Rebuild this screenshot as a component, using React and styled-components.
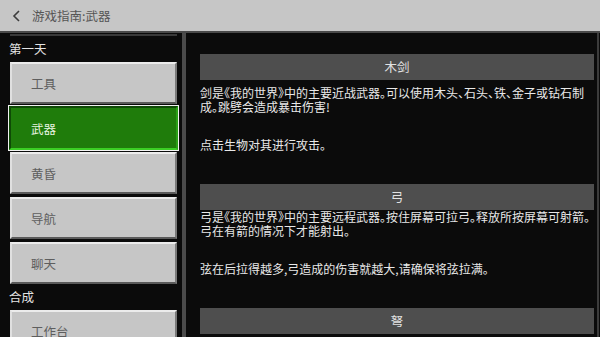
import { createGlobalStyle } from 'styled-components';
import styled from 'styled-components';

const GlobalStyle = createGlobalStyle`
  html, body {
    margin: 0;
    padding: 0;
    background: #0b0b0b;
  }
  body {
    font-family: "Noto Sans CJK SC", "Noto Sans", sans-serif;
    font-feature-settings: "halt";
  }
`;

const days = [
  { title: '第一天', items: ['工具', '武器', '黄昏', '导航', '聊天'] },
  { title: '合成', items: ['工作台'] },
];

const sections = [
  {
    name: '木剑',
    lead: 6,
    paras: [
      '剑是《我的世界》中的主要近战武器。可以使用木头、石头、铁、金子或钻石制成。跳劈会造成暴击伤害!',
      '点击生物对其进行攻击。',
    ],
  },
  {
    name: '弓',
    lead: 0,
    paras: [
      '弓是《我的世界》中的主要远程武器。按住屏幕可拉弓。释放所按屏幕可射箭。弓在有箭的情况下才能射出。',
      '弦在后拉得越多,弓造成的伤害就越大,请确保将弦拉满。',
    ],
  },
  { name: '弩', lead: 0, paras: [] },
];

export default function App() {
  const active = '武器';
  return (
    <SScreen>
      <GlobalStyle />
      <STopBar>
        <SBack>
          <svg width="10" height="14" viewBox="0 0 10 14">
            <polyline points="7,2 2,7 7,12" fill="none" stroke="#3c3c3c" strokeWidth="1.6" />
          </svg>
        </SBack>
        <STitle>游戏指南:武器</STitle>
      </STopBar>
      <SBody>
        <SSidebar>
          <SScrolledEdge />
          {days.map((group) => (
            <div key={group.title}>
              <SGroupLabel>{group.title}</SGroupLabel>
              <SList>
                {group.items.map((item) => (
                  <SNavButton key={item} $active={item === active}>
                    {item}
                  </SNavButton>
                ))}
              </SList>
            </div>
          ))}
        </SSidebar>
        <SDivider />
        <SContent>
          {sections.map((s) => (
            <SSection key={s.name}>
              <SHeader>{s.name}</SHeader>
              {s.paras.length > 0 && (
                <SText $lead={s.lead}>
                  {s.paras.map((p) => (
                    <p key={p}>{p}</p>
                  ))}
                </SText>
              )}
            </SSection>
          ))}
        </SContent>
        <SScrollbar />
      </SBody>
    </SScreen>
  );
}

const SScreen = styled.div`
  width: 600px;
  height: 337px;
  overflow: hidden;
  display: flex;
  flex-direction: column;
  background: #0b0b0b;
`;

const STopBar = styled.div`
  height: 31px;
  flex-shrink: 0;
  display: flex;
  align-items: center;
  background: #c6c6c6;
  border-bottom: 2px solid #4a4a4a;
`;

const SBack = styled.div`
  width: 31px;
  display: flex;
  justify-content: center;
  padding-left: 1px;
`;

const STitle = styled.div`
  font-size: 12.5px;
  color: #555;
`;

const SBody = styled.div`
  flex: 1;
  display: flex;
  overflow: hidden;
`;

const SSidebar = styled.div`
  width: 167px;
  padding: 0 5px 0 10px;
  flex-shrink: 0;
  overflow: hidden;
`;

const SScrolledEdge = styled.div`
  height: 2px;
  margin-top: 1px;
  background: #3a3a3a;
`;

const SGroupLabel = styled.div`
  height: 26px;
  line-height: 26px;
  margin-left: -1px;
  font-size: 12.5px;
  color: #e4e4e4;
`;

const SList = styled.div`
  display: flex;
  flex-direction: column;
  gap: 3px;
`;

const SNavButton = styled.div`
  box-sizing: border-box;
  height: ${(p) => (p.$active ? '44px' : '42px')};
  margin: ${(p) => (p.$active ? '-1px -1px' : '0')};
  padding-left: ${(p) => (p.$active ? '20px' : '19px')};
  display: flex;
  align-items: center;
  font-size: 12.5px;
  color: ${(p) => (p.$active ? '#e8f4e0' : '#5e5e5e')};
  background: ${(p) => (p.$active ? '#1f7c0b' : '#c6c6c6')};
  border-top: 2px solid ${(p) => (p.$active ? '#0f4a06' : '#ececec')};
  border-left: 2px solid ${(p) => (p.$active ? '#0f4a06' : '#e0e0e0')};
  border-bottom: 2px solid ${(p) => (p.$active ? '#3bcf24' : '#5a5a5a')};
  border-right: 2px solid ${(p) => (p.$active ? '#2aa016' : '#7a7a7a')};
  outline: ${(p) => (p.$active ? '1px solid #f2f2f2' : 'none')};
`;

const SDivider = styled.div`
  width: 4px;
  flex-shrink: 0;
  background: #4b4b4b;
`;

const SContent = styled.div`
  flex: 1;
  padding: 21px 3px 0 14px;
  display: flex;
  flex-direction: column;
  gap: 32px;
`;

const SSection = styled.div`
  display: flex;
  flex-direction: column;
`;

const SHeader = styled.div`
  height: 26px;
  line-height: 26px;
  text-align: center;
  background: #4e4e4e;
  color: #e2e2e2;
  font-size: 12.5px;
`;

const SText = styled.div`
  margin-top: ${(p) => p.$lead}px;
  color: #e8e8e8;
  font-size: 12px;
  line-height: 14px;

  p {
    margin: 0 0 24px;
  }
  p:last-child {
    margin-bottom: 0;
  }
`;

const SScrollbar = styled.div`
  width: 2px;
  margin-right: 1px;
  flex-shrink: 0;
  background: #3c3c3c;
`;
